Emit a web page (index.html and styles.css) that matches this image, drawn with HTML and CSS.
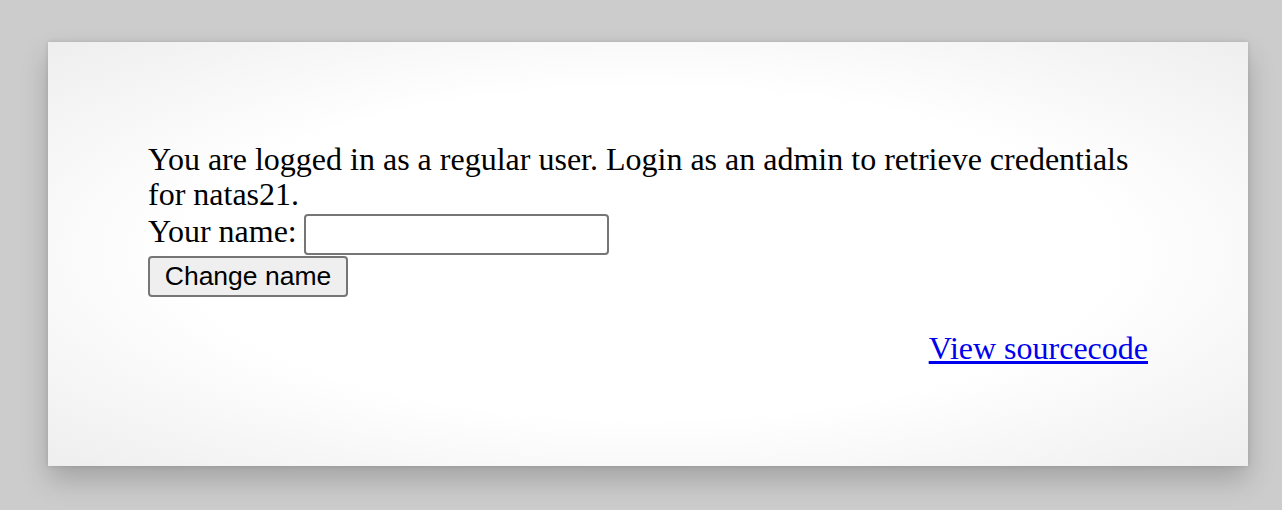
FILE: index.html
```html
<!DOCTYPE html>
<html>
<head>
<meta charset="utf-8">
<title>natas20</title>
<link rel="stylesheet" href="styles.css">
</head>
<body>
<div class="content">
You are logged in as a regular user. Login as an admin to retrieve credentials for natas21.
<form class="form" action="index.php" method="POST">
Your name: <input class="name-input" name="name" value=""><br>
<input class="btn" type="submit" value="Change name">
</form>
<div class="viewsource"><a href="index-source.html">View sourcecode</a></div>
</div>
</body>
</html>
```
FILE: styles.css
```css
html, body {
  margin: 0;
  padding: 0;
}
body {
  background: #cccccc;
  padding: 42px 34px 0 48px;
  height: 510px;
  box-sizing: border-box;
  overflow: hidden;
}
.content {
  width: 1000px;
  height: 324px;
  padding: 100px 100px 0 100px;
  background: radial-gradient(ellipse at center, #ffffff 55%, #eeeeee 100%);
  box-shadow: 0 14px 26px rgba(0,0,0,0.2), 0 0 5px rgba(0,0,0,0.12);
  font-family: "Liberation Serif", "Times New Roman", serif;
  font-size: 32px;
  line-height: 35px;
  color: #000;
}
.form {
  margin: 0 0 34px 0;
  padding-top: 2px;
}
.name-input {
  box-sizing: border-box;
  width: 305px;
  height: 41px;
  border: 2px solid #767676;
  border-radius: 4px;
  background: #fff;
  vertical-align: middle;
  font-size: 24px;
  padding: 0 4px;
  margin: 0 0 0 -1px;
}
.btn {
  box-sizing: border-box;
  width: 200px;
  height: 41px;
  border: 2px solid #767676;
  border-radius: 4px;
  background: #efefef;
  font-family: "Liberation Sans", Arial, sans-serif;
  font-size: 26.5px;
  color: #000;
  margin: 1px 0 0 0;
  padding: 0;
  vertical-align: top;
}
.viewsource {
  text-align: right;
}
.viewsource a {
  color: #0000ee;
}
```
